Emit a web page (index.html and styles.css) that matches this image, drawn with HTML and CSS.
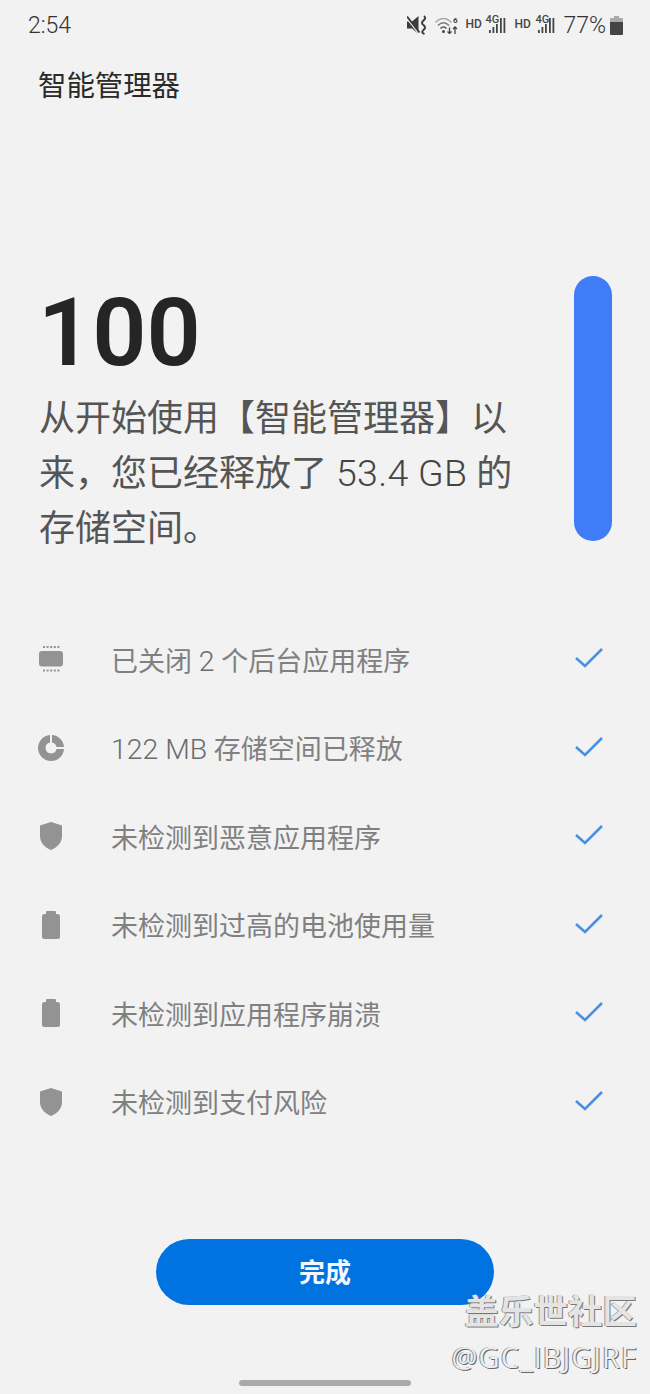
FILE: index.html
```html
<!DOCTYPE html>
<html lang="zh">
<head>
<meta charset="utf-8">
<title>智能管理器</title>
<link rel="stylesheet" href="styles.css">
</head>
<body>
<div class="screen">
  <header class="status">
    <span class="time">2:54</span>
    <div class="status-right">
      <svg class="ic-mute" viewBox="0 0 20 20"><path d="M0 6.500h5L11.500 1v18L5 13.500H0z" fill="#3c3c3c"/><path d="M0 3.500L12 19" stroke="#f2f2f2" stroke-width="1.400"/><path d="M0 1.500L12.500 17.500" stroke="#3c3c3c" stroke-width="2"/><path d="M17 1q2.500 2-.500 4.500t0 4.500q3 2.500 0 5t1 4" fill="none" stroke="#3c3c3c" stroke-width="2"/></svg>
      <svg class="ic-wifi" viewBox="0 0 23 18"><path d="M.5 6.500Q8.500-1.500 16.500 6.500" fill="none" stroke="#aaa" stroke-width="1.600"/><path d="M3 9.500Q8.500 4 14 9.500" fill="none" stroke="#777" stroke-width="1.600"/><path d="M5.500 12.500Q8.500 9.500 11.500 12.500" fill="none" stroke="#555" stroke-width="1.600"/><circle cx="8.500" cy="15.500" r="1.500" fill="#444"/><path d="M14.500 11.500v6m-2-2l2 2 2-2M20 18v-7m-2 2l2-2 2 2" fill="none" stroke="#444" stroke-width="1.300"/><text class="wifi-six" x="18" y="7">6</text></svg>
      <span class="hd">HD</span>
      <span class="sig"><span class="sig-label">4G</span><svg class="ic-sig" viewBox="0 0 22 16"><path d="M4 13h1.800v3H4zM7.500 10h1.800v6H7.500zM11 7h1.800v9H11zM15 1h1.800v15H15zM18.500 1h1.800v15h-1.800z" fill="#444"/></svg></span>
      <span class="hd hd-second">HD</span>
      <span class="sig"><span class="sig-label">4G</span><svg class="ic-sig" viewBox="0 0 22 16"><path d="M4 13h1.800v3H4zM7.500 10h1.800v6H7.500zM11 7h1.800v9H11zM15 1h1.800v15H15zM18.500 1h1.800v15h-1.800z" fill="#444"/></svg></span>
      <span class="pct">77%</span>
      <svg class="ic-batt" viewBox="0 0 13 19"><path d="M4 0h5v2h3a1 1 0 0 1 1 1v4H0V3a1 1 0 0 1 1-1h3z" fill="#aaa"/><path d="M0 6h13v12a1 1 0 0 1-1 1H1a1 1 0 0 1-1-1z" fill="#444"/></svg>
    </div>
  </header>

  <h1 class="title">智能管理器</h1>

  <section class="hero">
    <div class="hero-text">
      <div class="score">100</div>
      <p class="summary">
        <span class="line">从开始使用【智能管理器】以</span>
        <span class="line">来，您已经释放了 <span class="num">53.4 GB</span> 的</span>
        <span class="line">存储空间。</span>
      </p>
    </div>
    <div class="bar"></div>
  </section>

  <ul class="list">
    <li class="row">
      <svg class="ic" viewBox="0 0 26 28"><rect x="1" y="6" width="24" height="15.500" rx="3" fill="#939393"/><path d="M5 2h16.500M5 25.500h16.500" stroke="#939393" stroke-width="2" stroke-dasharray="2 1.600"/></svg>
      <span class="label">已关闭 <span class="num">2</span> 个后台应用程序</span>
      <svg class="check" viewBox="0 0 30 24"><path d="M2 11l9 8L28 2" fill="none" stroke="#4a90e2" stroke-width="2.600"/></svg>
    </li>
    <li class="row">
      <svg class="ic" viewBox="0 0 26 26"><path d="M12 0v7.500A5.500 5.500 0 1 0 18.500 14H26A13 13 0 1 1 12 0z" fill="#939393"/><path d="M14 0a13 13 0 0 1 12 12h-7.500A6 6 0 0 0 14 7.500z" fill="#939393"/></svg>
      <span class="label"><span class="num">122 MB</span> 存储空间已释放</span>
      <svg class="check" viewBox="0 0 30 24"><path d="M2 11l9 8L28 2" fill="none" stroke="#4a90e2" stroke-width="2.600"/></svg>
    </li>
    <li class="row">
      <svg class="ic" viewBox="0 0 24 28"><path d="M12 0l11 3.500V14c0 7-5 11.500-11 14C6 25.500 1 21 1 14V3.500z" fill="#939393"/></svg>
      <span class="label">未检测到恶意应用程序</span>
      <svg class="check" viewBox="0 0 30 24"><path d="M2 11l9 8L28 2" fill="none" stroke="#4a90e2" stroke-width="2.600"/></svg>
    </li>
    <li class="row">
      <svg class="ic" viewBox="0 0 24 28"><path d="M8 0h8a1 1 0 0 1 1 1v2h1.500A2.500 2.500 0 0 1 21 5.500v20a2.500 2.500 0 0 1-2.500 2.500h-13A2.500 2.500 0 0 1 3 25.500v-20A2.500 2.500 0 0 1 5.500 3H7V1a1 1 0 0 1 1-1z" fill="#939393"/></svg>
      <span class="label">未检测到过高的电池使用量</span>
      <svg class="check" viewBox="0 0 30 24"><path d="M2 11l9 8L28 2" fill="none" stroke="#4a90e2" stroke-width="2.600"/></svg>
    </li>
    <li class="row">
      <svg class="ic" viewBox="0 0 24 28"><path d="M8 0h8a1 1 0 0 1 1 1v2h1.500A2.500 2.500 0 0 1 21 5.500v20a2.500 2.500 0 0 1-2.500 2.500h-13A2.500 2.500 0 0 1 3 25.500v-20A2.500 2.500 0 0 1 5.500 3H7V1a1 1 0 0 1 1-1z" fill="#939393"/></svg>
      <span class="label">未检测到应用程序崩溃</span>
      <svg class="check" viewBox="0 0 30 24"><path d="M2 11l9 8L28 2" fill="none" stroke="#4a90e2" stroke-width="2.600"/></svg>
    </li>
    <li class="row">
      <svg class="ic" viewBox="0 0 24 28"><path d="M12 0l11 3.500V14c0 7-5 11.500-11 14C6 25.500 1 21 1 14V3.500z" fill="#939393"/></svg>
      <span class="label">未检测到支付风险</span>
      <svg class="check" viewBox="0 0 30 24"><path d="M2 11l9 8L28 2" fill="none" stroke="#4a90e2" stroke-width="2.600"/></svg>
    </li>
  </ul>

  <div class="action"><button class="done">完成</button></div>
  <div class="home-bar"></div>

  <div class="watermark">
    <div class="wm-name">盖乐世社区</div>
    <div class="wm-user">@GC_IBJGJRF</div>
  </div>
</div>
</body>
</html>
```

FILE: styles.css
```css
* { box-sizing: border-box; }
html, body { margin: 0; padding: 0; }
body {
  background: #f2f2f2;
  font-family: "Roboto", "Noto Sans CJK SC", sans-serif;
}
.screen {
  position: relative;
  width: 650px;
  height: 1394px;
  overflow: hidden;
  display: flex;
  flex-direction: column;
}
.status {
  height: 50px;
  padding: 0 27px 0 28px;
  display: flex;
  align-items: center;
  justify-content: space-between;
  color: #444;
}
.time { font-size: 23px; font-weight: 300; color: #333; }
.status-right { display: flex; align-items: center; }
.ic-mute { width: 20px; height: 20px; margin-right: 8px; }
.ic-wifi { width: 23px; height: 18px; }
.wifi-six { font-size: 8px; font-weight: 700; fill: #444; }
.hd { width: 16px; font-size: 12px; font-weight: 500; margin-left: 7px; padding-bottom: 2px; color: #444; white-space: nowrap; }
.hd-second { width: 15px; }
.sig { position: relative; display: block; width: 22px; height: 20px; margin-left: 4px; }
.hd-second + .sig { margin-left: 6px; width: 21px; }
.sig-label { position: absolute; left: 0; top: -1px; font-size: 11px; font-weight: 500; line-height: 12px; }
.ic-sig { position: absolute; right: 0; bottom: 2px; width: 22px; height: 16px; }
.pct { font-size: 23px; font-weight: 300; margin-left: 7px; color: #333; }
.ic-batt { width: 13px; height: 19px; margin-left: 4px; }
.title {
  margin: 0;
  padding: 16px 0 0 38px;
  height: 72px;
  font-size: 28.4px;
  font-weight: 400;
  line-height: 42px;
  color: #2a2a2a;
}
.hero {
  margin-top: 154px;
  padding: 0 38px;
  display: flex;
  justify-content: space-between;
  align-items: flex-start;
  height: 339px;
}
.hero-text { width: 486px; margin-top: 1px; }
.score {
  font-size: 95px;
  font-weight: 600;
  line-height: 112px;
  margin-bottom: 3px;
  color: #252525;
}
.summary {
  margin: 0;
  padding-left: 1px;
  font-size: 36px;
  line-height: 55px;
  color: #555;
}
.line { display: block; height: 55px; white-space: nowrap; }
.summary .num { font-size: 37.5px; font-weight: 300; letter-spacing: .3px; line-height: 1; color: #444; }
.bar {
  width: 38px;
  height: 265px;
  border-radius: 19px;
  background: #3f7cf5;
}
.list {
  list-style: none;
  margin: 0;
  padding: 0 46px 0 38px;
}
.row {
  height: 88.5px;
  display: flex;
  align-items: center;
}
.ic { width: 26px; height: 28px; flex: none; }
.label {
  flex: 1;
  margin-left: 47px;
  font-size: 27px;
  color: #808080;
}
.label .num { font-size: 28.4px; font-weight: 300; line-height: 1; color: #6c6c6c; }
.check { width: 30px; height: 24px; flex: none; }
.action { margin-top: 93px; display: flex; justify-content: center; }
.done {
  width: 338px;
  height: 66px;
  padding: 0 0 3px;
  border: 0;
  border-radius: 33px;
  background: #0073e0;
  color: #f4f8fc;
  font-family: inherit;
  font-size: 26px;
  font-weight: 700;
}
.home-bar {
  width: 172px;
  height: 6px;
  margin: 75px auto 0;
  border-radius: 3px;
  background: #aaa;
}
.watermark {
  position: absolute;
  right: 13px;
  top: 1290px;
  text-align: right;
}
.wm-name {
  font-size: 34.5px;
  line-height: 44px;
  font-weight: 700;
  color: #e4e4e4;
  text-shadow: 1px 1px 0 #777, -1px 0 0 #999;
}
.wm-user {
  font-family: "Open Sans", sans-serif;
  font-size: 29px;
  letter-spacing: 1px;
  line-height: 38px;
  margin-top: 4px;
  color: #eee;
  text-shadow: 1px 1px 0 #666, -1px 0 0 #888;
}
```
